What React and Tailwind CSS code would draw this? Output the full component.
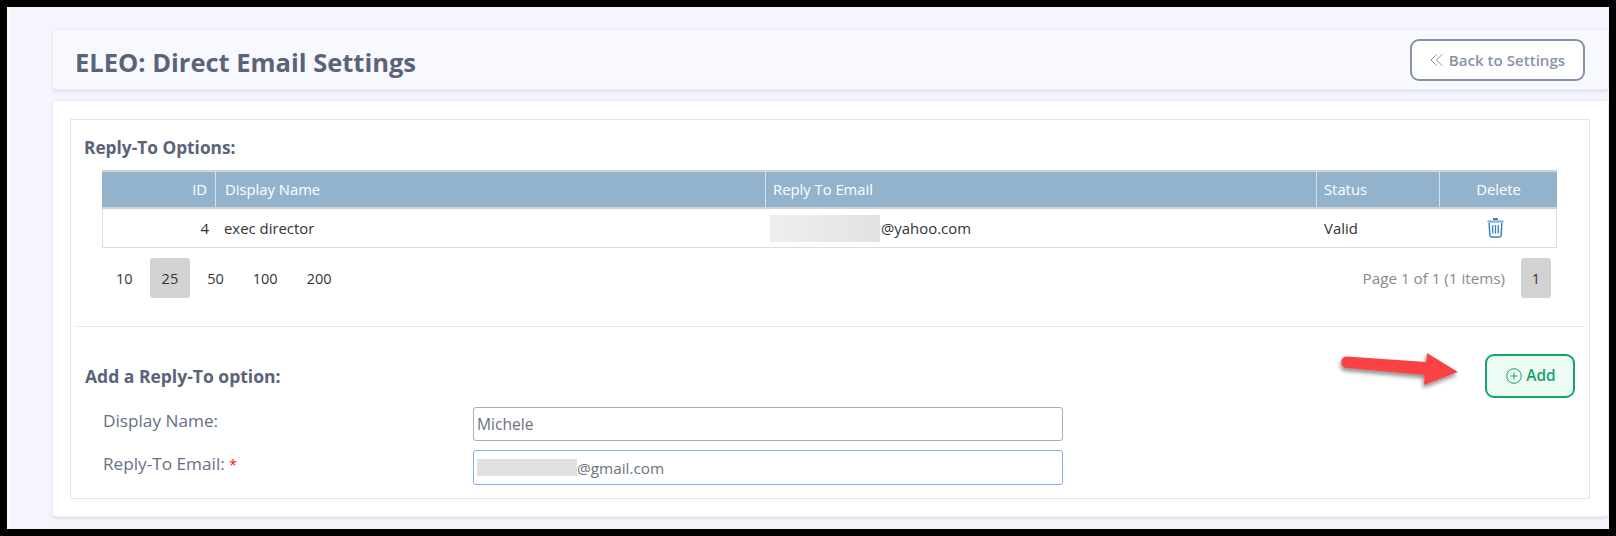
const FONT = "font-['Open_Sans','Noto_Sans',sans-serif]";

function Trash() {
  return (
    <svg width="17" height="20" viewBox="0 0 17 20" fill="none" stroke="#3b82c4" strokeWidth="1.5">
      <path d="M6 1h5" strokeWidth="2" />
      <path d="M.5 3.5h16" strokeWidth="2.2" stroke="#7fb0dd" />
      <path d="M2.2 5l.6 12.2c.1 1 .8 1.8 1.8 1.8h7.8c1 0 1.7-.8 1.8-1.8L14.8 5" />
      <path d="M5.7 7v8.5M8.5 7v8.5M11.3 7v8.5" strokeWidth="1.3" />
    </svg>
  );
}

function Arrow() {
  return (
    <svg className="absolute left-[1335px] top-[346px]" width="135" height="50" viewBox="0 0 135 50" fill="none">
      <defs>
        <filter id="s" x="-10%" y="-20%" width="125%" height="160%">
          <feDropShadow dx="-1" dy="3" stdDeviation="2" floodColor="#000" floodOpacity="0.45" />
        </filter>
      </defs>
      <path
        d="M12 10.5L91 16L92 7L123 26L89 39L89.5 29L11.5 22C4.5 21.5 4.5 10 12 10.5Z"
        fill="#fb4242"
        filter="url(#s)"
      />
    </svg>
  );
}

function PageSize({ children, active }) {
  return (
    <span className={`flex h-10 items-center rounded-[3px] px-[12px] pt-[1px] text-[#333] ${active ? "bg-[#d2d2d2]" : ""}`}>
      {children}
    </span>
  );
}

export default function App() {
  return (
    <div className={`relative h-[536px] w-[1616px] overflow-hidden bg-black p-[7px] text-[14.5px] ${FONT}`}>
      <div className="h-[522px] border-l-[3px] border-[#fbfbfe] bg-[#f5f6fd] pl-[42px] pt-[22px]">
        <div className="flex h-[61px] w-[1557px] items-center justify-between rounded-[4px] border border-[#ebedf5] bg-[#f8f9fe] pl-[22px] pr-[23px] shadow-[0_2px_3px_rgba(80,80,110,0.12)]">
          <h1 className="pt-[6px] text-[25.5px] font-bold text-[#5a6378]">ELEO: Direct Email Settings</h1>
          <button className="flex h-[42px] w-[175px] items-center justify-center gap-[5px] rounded-[9px] border-2 border-[#8792a8] bg-white pt-[1px] text-[15.1px] font-semibold text-[#8792a8]">
            <svg width="14" height="14" viewBox="0 0 14 14" fill="none" stroke="#8792a8" strokeWidth="1">
              <path d="M6.5 1.5L1 7l5.5 5.5M12 1.5L6.5 7l5.5 5.5" />
            </svg>
            Back to Settings
          </button>
        </div>

        <div className="mt-[10px] h-[417px] w-[1557px] rounded-[4px] border border-[#ebedf5] bg-white pl-[17px] pr-[18px] pt-[18px] shadow-[0_2px_3px_rgba(80,80,110,0.12)]">
          <div className="h-[380px] border border-[#e6e6e6] px-[4px]">
            <h2 className="ml-[9px] mt-[18px] h-[20px] text-[17.3px] font-bold leading-[20px] text-[#5a6378]">
              Reply-To Options:
            </h2>
            <div className="ml-[27px] mt-[12px] w-[1455px]">
              <div className="grid h-[39px] grid-cols-[114px_550px_551px_123px_1fr] border-y-2 border-[#d2d2d2] bg-[#93b3cd] text-[14.8px] text-white">
                <div className="flex items-center justify-end border-r border-[#d8e2ea] pr-[8px]">ID</div>
                <div className="flex items-center border-r border-[#d8e2ea] pl-[9px]">Display Name</div>
                <div className="flex items-center border-r border-[#d8e2ea] pl-[7px]">Reply To Email</div>
                <div className="flex items-center border-r border-[#d8e2ea] pl-[7px]">Status</div>
                <div className="flex items-center justify-center">Delete</div>
              </div>
              <div className="grid h-[39px] grid-cols-[114px_550px_551px_123px_1fr] border-x border-b border-[#dcdcdc] bg-white text-[14.9px] text-[#333]">
                <div className="flex items-center justify-end pr-[8px]">4</div>
                <div className="flex items-center pl-[7px]">exec director</div>
                <div className="flex items-center pl-[3px]">
                  <span className="h-[27px] w-[110px] bg-gradient-to-r from-[#efefef] to-[#e2e2e2]" />
                  <span className="ml-[1px]">@yahoo.com</span>
                </div>
                <div className="flex items-center pl-[6px]">Valid</div>
                <div className="flex items-center justify-center pr-[7px]">
                  <Trash />
                </div>
              </div>
            </div>
            <div className="ml-[29px] mt-[10px] flex h-10 w-[1447px] items-center justify-between">
              <div className="flex items-center gap-[5px]">
                <PageSize>10</PageSize>
                <PageSize active>25</PageSize>
                <PageSize>50</PageSize>
                <PageSize>100</PageSize>
                <PageSize>200</PageSize>
              </div>
              <div className="flex items-center gap-[16px]">
                <span className="pt-[1px] text-[15.2px] text-[#8a8a8a]">Page 1 of 1 (1 items)</span>
                <span className="flex h-10 w-[30px] items-center justify-center rounded-[3px] bg-[#d2d2d2] pt-[1px] text-[#333]">1</span>
              </div>
            </div>
            <div className="mt-[28px] h-px w-[1509px] bg-[#e8e8e8]" />
            <div className="flex h-[80px] items-start justify-between pl-[10px] pr-[10px]">
              <h2 className="mt-[39px] text-[17.5px] font-bold leading-[20px] text-[#5a6378]">Add a Reply-To option:</h2>
              <button className="mt-[27px] flex h-[44px] w-[90px] items-center justify-center gap-[4px] rounded-[9px] border-2 border-[#18a267] bg-[#ecfbf4] pl-[2px] text-[15.4px] font-semibold text-[#18a267]">
                <svg width="16" height="16" viewBox="0 0 16 16" fill="none" stroke="#18a267" strokeWidth="1">
                  <circle cx="8" cy="8" r="7.3" />
                  <path d="M8 4.5v7M4.5 8h7" />
                </svg>
                Add
              </button>
            </div>
            <div className="flex h-[34px] items-start pl-[28px] text-[17.2px] text-[#667085]">
              <label className="mt-[1px] w-[370px]">Display Name:</label>
              <div className="flex h-[34px] w-[590px] items-center rounded-[3px] border border-[#aeaeb4] pl-[3px] pt-[2px] text-[15.6px] text-[#6b7280]">Michele</div>
            </div>
            <div className="mt-[9px] flex h-[35px] items-start pl-[28px] text-[17.2px] text-[#667085]">
              <label className="mt-[1px] w-[370px]">
                Reply-To Email: <span className="text-[14px] text-[#f01010]">*</span>
              </label>
              <div className="flex h-[35px] w-[590px] items-center rounded-[3px] border border-[#7fb0f5] pl-[3px] text-[15.3px] text-[#6b7280]">
                <span className="h-[17px] w-[100px] bg-[#dfe0e2]" />
                <span className="pt-[2px]">@gmail.com</span>
              </div>
            </div>
          </div>
        </div>
      </div>
      <Arrow />
    </div>
  );
}
